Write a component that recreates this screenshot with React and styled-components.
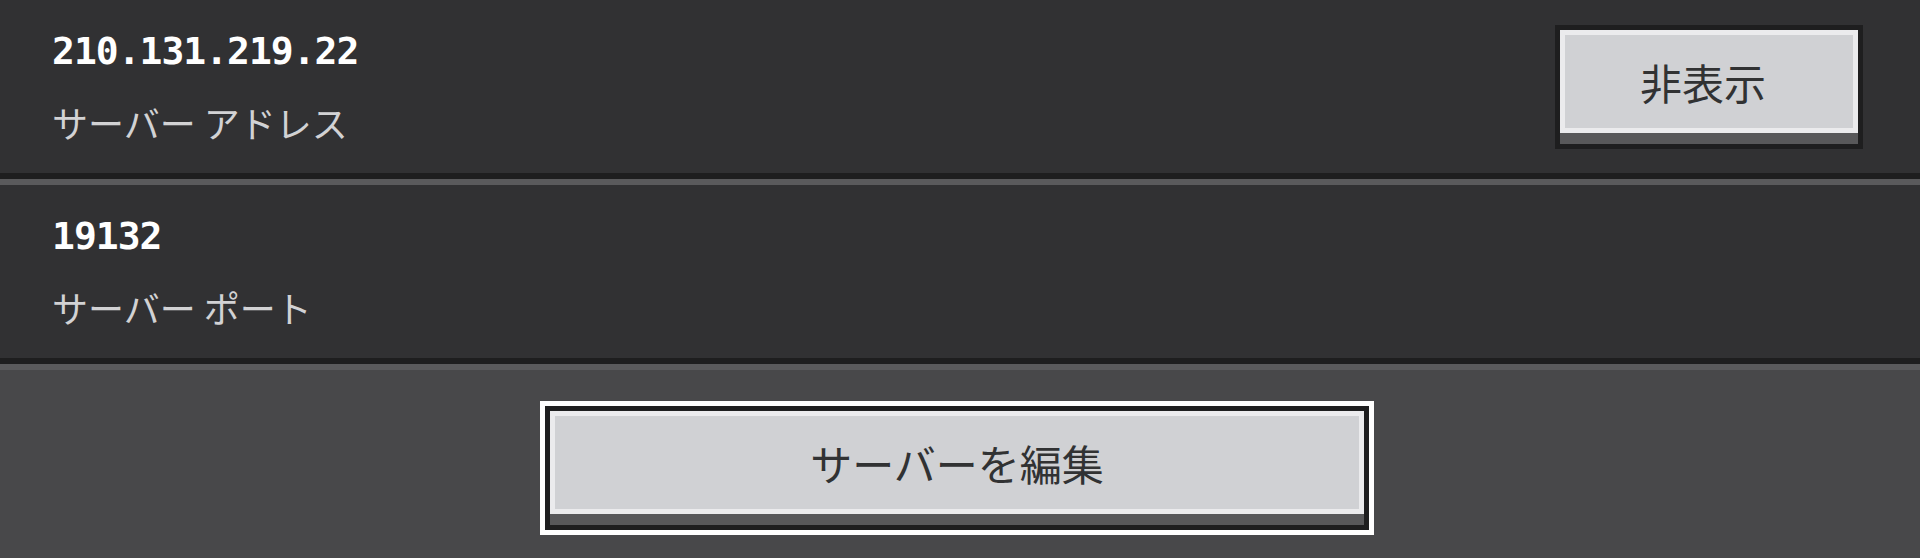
import styled, { createGlobalStyle } from 'styled-components';

const GlobalStyle = createGlobalStyle`
    html, body {
        margin: 0;
        padding: 0;
        background: #48484a;
        overflow: hidden;
    }
    * {
        box-sizing: border-box;
    }
`;

const rows = [
    { value: '210.131.219.22', label: 'サーバー アドレス', action: '非表示' },
    { value: '19132', label: 'サーバー ポート' },
];

export default function App() {
    return (
        <Page>
            <GlobalStyle />
            {rows.map((row, i) => (
                <Row key={row.label} first={i === 0}>
                    <Info>
                        <Value>{row.value}</Value>
                        <Label>{row.label}</Label>
                    </Info>
                    {row.action && (
                        <McButton width={308}>
                            <Face shift={12}>{row.action}</Face>
                        </McButton>
                    )}
                </Row>
            ))}
            <Footer>
                <FocusRing>
                    <McButton width={824}>
                        <Face>サーバーを編集</Face>
                    </McButton>
                </FocusRing>
            </Footer>
        </Page>
    );
}

const Page = styled.div`
    width: 1920px;
    height: 558px;
    display: flex;
    flex-direction: column;
    background: #48484a;
    font-family: "Noto Sans CJK JP", "Noto Sans", sans-serif;
`;

const Row = styled.div`
    display: flex;
    align-items: center;
    justify-content: space-between;
    height: ${(p) => (p.first ? 179 : 185)}px;
    padding: 0 57px 0 50px;
    background: #313133;
    border-top: ${(p) => (p.first ? 'none' : '6px solid #5a5a5c')};
    border-bottom: 6px solid #1e1e1f;
`;

const Info = styled.div`
    align-self: flex-start;
    display: flex;
    flex-direction: column;
    gap: 28px;
    padding: 32px 0 0 2px;
`;

const Value = styled.div`
    font-family: "DejaVu Sans Mono", monospace;
    font-weight: bold;
    font-size: 38px;
    line-height: 38px;
    letter-spacing: -1px;
    color: #ffffff;
`;

const Label = styled.div`
    font-size: 36px;
    line-height: 48px;
    color: #d2d2d4;
`;

const McButton = styled.div`
    width: ${(p) => p.width}px;
    height: 124px;
    border: 5px solid #1e1e1f;
    background: #58585a;
    padding-bottom: 11px;
`;

const Face = styled.div`
    height: 100%;
    display: flex;
    align-items: center;
    justify-content: center;
    padding-right: ${(p) => p.shift || 0}px;
    background: #d0d1d4;
    border: 5px solid #ebebed;
    font-size: 42px;
    color: #313233;
    font-family: "Noto Sans CJK JP", sans-serif;
`;

const Footer = styled.div`
    display: flex;
    justify-content: center;
    padding: 31px 6px 0 0;
    border-top: 6px solid #5a5a5c;
`;

const FocusRing = styled.div`
    border: 5px solid #ffffff;
`;
